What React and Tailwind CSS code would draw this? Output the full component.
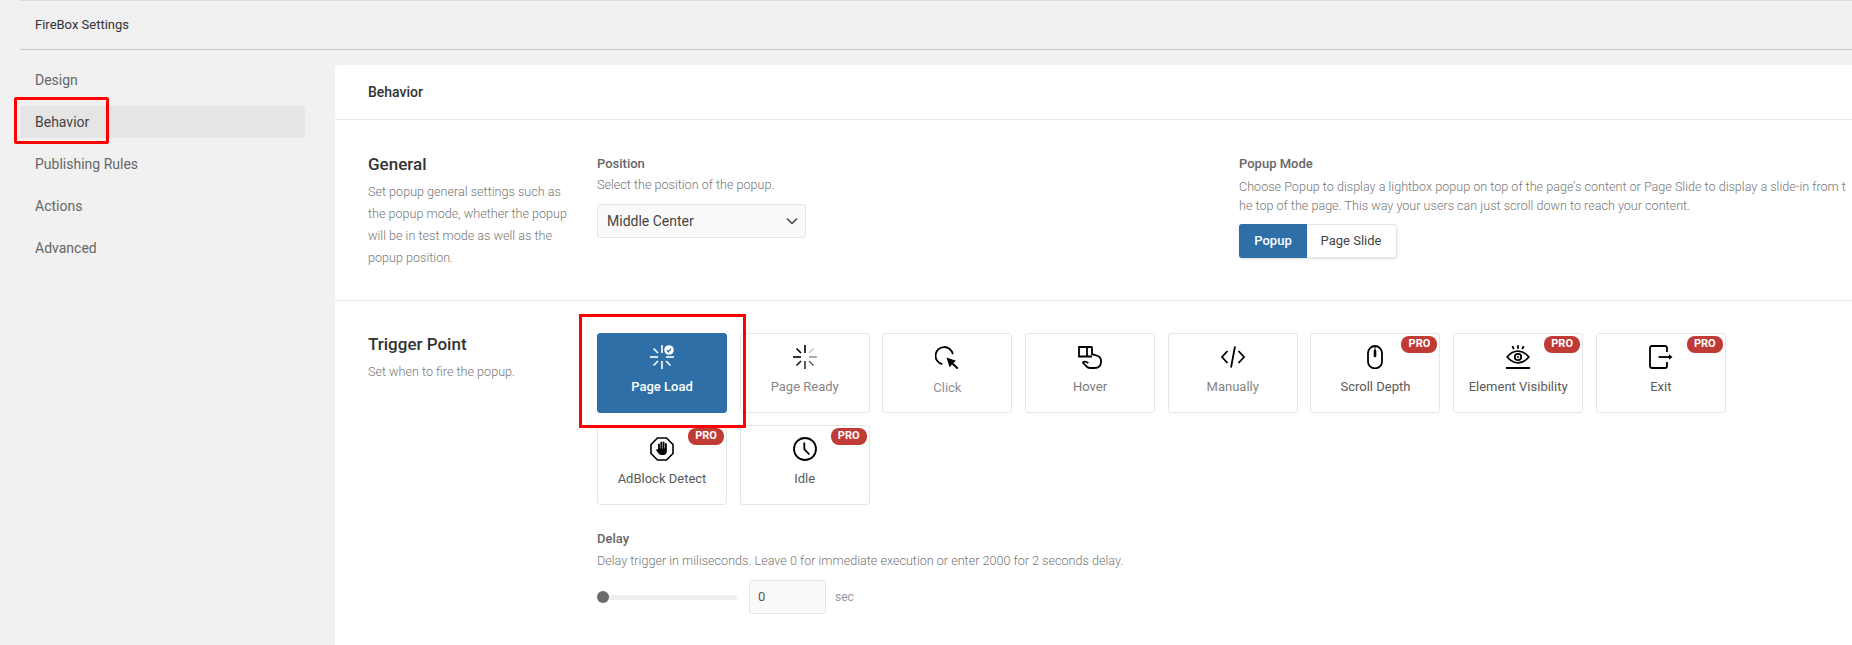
const navItems = ['Design', 'Behavior', 'Publishing Rules', 'Actions', 'Advanced'];

function SpinnerIcon({ badge }) {
  const rays = badge
    ? [['M12 0v8', '#fff'], ['M3.5 3.5 8 8', '#fff'], ['M0 12h8', '#fff'], ['M3.5 20.5 8 16', '#fff'], ['M12 16v8', '#fff'], ['M20.5 20.5 16 16', '#fff'], ['M16 12h8', '#fff']]
    : [['M12 0v8', '#000'], ['M3.5 3.5 8 8', '#000'], ['M0 12h8', '#000'], ['M3.5 20.5 8 16', '#111'], ['M12 16v8', '#333'], ['M20.5 20.5 16 16', '#666'], ['M16 12h8', '#999'], ['M20.5 3.5 16 8', '#c4c4c4']];
  return (
    <svg width="24" height="24" viewBox="0 0 24 24" fill="none" strokeWidth="1.6">
      {rays.map(([d, c]) => <path key={d} d={d} stroke={c} />)}
      {badge && (
        <>
          <circle cx="19" cy="5" r="4.8" fill="#fff" />
          <path d="M16.8 5.1 18.4 6.7 21.2 3.6" stroke="#2e6fa7" strokeWidth="1.3" />
        </>
      )}
    </svg>
  );
}

function ClickIcon() {
  return (
    <svg width="24" height="24" viewBox="0 0 24 24" fill="none" stroke="#000" strokeWidth="1.8">
      <path d="M7.300 19.200A8.700 8.700 0 1 1 17.800 9.200" />
      <path d="M11.5 12.5 21 15.7 18.4 18 23.6 23 22 24.2 17 19.4 14.6 22.2Z" fill="#000" stroke="none" />
    </svg>
  );
}

function HoverIcon() {
  return (
    <svg width="24" height="24" viewBox="0 0 24 24" fill="none" stroke="#000" strokeWidth="1.8">
      <path d="M14 11.5H1V2h13" />
      <path d="M9 2v9.5" />
      <path d="M14 1.500v7.700l4.600 1.300c2.700.8 4.500 2.400 4.500 5.400 0 4.400-2.600 7.100-6.600 7.100h-4.300c-2 0-3.400-.8-4.400-2.500L4.500 17.400" />
      <path d="M4.500 17.400c1.500-1 4.300-.9 5.800.8" />
    </svg>
  );
}

function CodeIcon() {
  return (
    <svg width="24" height="24" viewBox="0 0 24 24" fill="none" stroke="#000" strokeWidth="1.8">
      <path d="M6.500 6 1 12l5.500 6" />
      <path d="M17.500 6 23 12l-5.500 6" />
      <path d="M14 1.500 10 22.500" />
    </svg>
  );
}

function MouseIcon() {
  return (
    <svg width="24" height="24" viewBox="0 0 24 24" fill="none" stroke="#000" strokeWidth="1.8">
      <rect x="5" y="1" width="14" height="22.4" rx="7" />
      <path d="M12 1v4" strokeWidth="1" />
      <path d="M12 6v5" strokeWidth="2.6" strokeLinecap="round" />
    </svg>
  );
}

function EyeIcon() {
  return (
    <svg width="24" height="24" viewBox="0 0 24 24" fill="none" stroke="#000" strokeWidth="1.8">
      <path d="M12 .3v3.400M6.400 1l1.300 3.200M17.600 1l-1.300 3.200" />
      <path d="M1.200 12C4.800 7.600 8.200 6.200 12 6.200s7.200 1.400 10.800 5.800c-3.600 4.400-7 5.800-10.800 5.800S4.800 16.400 1.200 12Z" />
      <circle cx="12" cy="12" r="3.2" />
      <circle cx="12" cy="12" r="1" fill="#000" stroke="none" />
      <path d="M0 23h24" strokeWidth="2" />
    </svg>
  );
}

function ExitIcon() {
  return (
    <svg width="24" height="24" viewBox="0 0 24 24" fill="none" stroke="#000" strokeWidth="1.8">
      <path d="M18 7V2.900C18 1.800 17.200 1 16.100 1H2.900C1.800 1 1 1.800 1 2.900v18.200C1 22.200 1.800 23 2.900 23h13.200c1.100 0 1.900-.8 1.900-1.900V17" />
      <path d="M9.500 12H20" />
      <path d="M20 9.300 23.500 12 20 14.700Z" fill="#000" stroke="none" />
    </svg>
  );
}

function StopHandIcon() {
  return (
    <svg width="24" height="24" viewBox="0 0 24 24" fill="none" stroke="#000" strokeWidth="1.6">
      <path d="M7.500 1h9L23 7.500v9L16.500 23h-9L1 16.500v-9Z" />
      <path d="M9 12V7.500M11.300 12V5.500M13.600 12V5.500M15.900 12V7" strokeWidth="1.800" strokeLinecap="round" />
      <path d="M8.200 11.500H16.800v3c0 2-1.500 3.500-3.500 3.500h-1.800c-1.500 0-2.500-.7-3.200-1.900L6.300 13.500c-.5-1 .8-1.800 1.900-.8Z" fill="#000" stroke="none" />
    </svg>
  );
}

function ClockIcon() {
  return (
    <svg width="24" height="24" viewBox="0 0 24 24" fill="none" stroke="#000" strokeWidth="1.8">
      <circle cx="12" cy="12" r="11" />
      <path d="M11.300 5.500v6.700l5 5.300" strokeWidth="1.800" />
    </svg>
  );
}

const triggers = [
  { label: 'Page Load', icon: <SpinnerIcon badge />, active: true },
  { label: 'Page Ready', icon: <SpinnerIcon />, color: 'text-[#858585]' },
  { label: 'Click', icon: <ClickIcon />, color: 'text-[#8f8f8f] pt-px' },
  { label: 'Hover', icon: <HoverIcon />, color: 'text-[#7a7a7a]' },
  { label: 'Manually', icon: <CodeIcon />, color: 'text-[#858585]' },
  { label: 'Scroll Depth', icon: <MouseIcon />, pro: true },
  { label: 'Element Visibility', icon: <EyeIcon />, pro: true },
  { label: 'Exit', icon: <ExitIcon />, pro: true },
  { label: 'AdBlock Detect', icon: <StopHandIcon />, pro: true },
  { label: 'Idle', icon: <ClockIcon />, pro: true },
];

function TriggerCard({ label, icon, active, pro, color }) {
  return (
    <div
      className={`relative flex h-[80px] w-[130px] flex-col items-center rounded-[3px] border pt-[11px] ${
        active ? 'border-[#2e6fa7] bg-[#2e6fa7] font-medium text-white' : `border-[#e6e6e6] bg-white text-[#5a5a5a]`
      }`}
    >
      {icon}
      <span className={`mt-[9px] text-[13px] leading-[18px] ${color || ''}`}>{label}</span>
      {pro && (
        <span className="absolute top-[2px] right-[2px] flex h-[17px] w-[36px] items-center justify-center rounded-[8px] bg-[#c03a36] text-[11px] font-bold text-white">
          PRO
        </span>
      )}
      {active && <div className="absolute top-[-20px] left-[-19px] z-10 h-[114px] w-[167px] border-[3px] border-[#ff0000]" />}
    </div>
  );
}

function SectionTitle({ title, children }) {
  return (
    <div className="w-[262px] shrink-0 pl-[33px]">
      <h3 className="text-[17px] leading-[22px] font-medium text-[#333]">{title}</h3>
      <p className="mt-[6px] w-[205px] text-[12.6px] leading-[22px] font-light text-[#777]">{children}</p>
    </div>
  );
}

export default function App() {
  return (
    <div className="h-[645px] overflow-hidden bg-[#f1f1f1] font-['Roboto',sans-serif]">
      <div className="ml-5 flex h-[50px] items-center border-y border-t-[#dcdcdc] border-b-[#c8c8c8] bg-[#f0f0f0] pl-[15px] text-[13px] text-[#333]">
        FireBox Settings
      </div>
      <div className="flex">
        <aside className="mt-[14px] ml-5 flex w-[315px] shrink-0 flex-col gap-[10px]">
          {navItems.map((item) => (
            <div
              key={item}
              className={`relative flex h-[32px] w-[285px] items-center rounded-[3px] pl-[15px] text-[14px] ${
                item === 'Behavior' ? 'bg-[#e5e5e5] text-[#444]' : 'text-[#666]'
              }`}
            >
              {item}
              {item === 'Behavior' && <div className="absolute top-[-9px] left-[-6px] h-[47px] w-[95px] rounded-[2px] border-[3px] border-[#ff0000]" />}
            </div>
          ))}
        </aside>

        <main className="mt-[15px] h-[600px] min-w-0 flex-1 overflow-hidden rounded-tl-[3px] bg-white">
          <div className="flex h-[55px] items-center border-b border-[#e8e8e8] pl-[33px] text-[14px] font-medium text-[#333]">Behavior</div>

          <section className="flex h-[181px] border-b border-[#e8e8e8] pt-[33px]">
            <SectionTitle title="General">
              Set popup general settings such as the popup mode, whether the popup will be in test mode as well as the popup position.
            </SectionTitle>
            <div className="w-[642px] shrink-0">
              <div className="text-[13px] leading-[22px] font-medium text-[#666]">Position</div>
              <div className="text-[12.6px] leading-[20px] font-light text-[#777]">Select the position of the popup.</div>
              <div className="mt-[9px] flex h-[34px] w-[209px] items-center justify-between rounded-[3px] border border-[#e4e4e4] bg-[#fafafa] pr-[7px] pl-[9px] text-[14px] text-[#444]">
                Middle Center
                <svg width="12" height="8" viewBox="0 0 12 8" fill="none" stroke="#444" strokeWidth="1.5">
                  <path d="M1 1.500 6 6.500 11 1.500" />
                </svg>
              </div>
            </div>
            <div className="min-w-0 flex-1">
              <div className="text-[13px] leading-[22px] font-medium text-[#666]">Popup Mode</div>
              <div className="mt-[2px] w-[610px] text-[12.6px] leading-[19px] font-light break-all text-[#777]">
                Choose Popup to display a lightbox popup on top of the page's content or Page Slide to display a slide-in from the top of the page. This way your users can just scroll down to reach your content.
              </div>
              <div className="mt-[9px] flex h-[34px] w-[158px] rounded-[3px] border border-[#e6e6e6] text-[13px] font-medium shadow-sm">
                <div className="-m-px flex w-[68px] items-center justify-center rounded-l-[3px] bg-[#2e6fa7] text-white">Popup</div>
                <div className="flex flex-1 items-center justify-center font-normal text-[#444]">Page Slide</div>
              </div>
            </div>
          </section>

          <section className="flex pt-[32px]">
            <SectionTitle title="Trigger Point">Set when to fire the popup.</SectionTitle>
            <div className="w-[1140px] shrink-0">
              <div className="flex flex-wrap gap-x-[12.7px] gap-y-[12px]">
                {triggers.map((t) => <TriggerCard key={t.label} {...t} />)}
              </div>
              <div className="mt-[24px] text-[13px] leading-[20px] font-medium text-[#666]">Delay</div>
              <div className="mt-[2px] text-[12.6px] leading-[20px] font-light text-[#777]">
                Delay trigger in miliseconds. Leave 0 for immediate execution or enter 2000 for 2 seconds delay.
              </div>
              <div className="mt-[9px] flex items-center">
                <div className="relative h-[5px] w-[140px] rounded-full bg-[#eeeeee]">
                  <div className="absolute top-[-4px] left-0 h-[12px] w-[12px] rounded-full bg-[#6b6b6b]" />
                </div>
                <div className="ml-3 flex h-[34px] w-[77px] items-center rounded-[3px] border border-[#e6e6e6] bg-[#fafafa] pl-[8px] text-[13px] text-[#555]">0</div>
                <span className="ml-[9px] text-[12px] text-[#999]">sec</span>
              </div>
            </div>
          </section>
        </main>
      </div>
    </div>
  );
}
